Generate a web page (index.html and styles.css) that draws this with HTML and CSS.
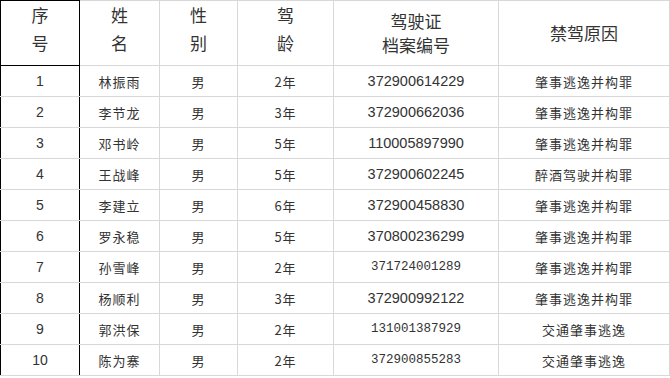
FILE: index.html
```html
<!DOCTYPE html>
<html lang="zh">
<head>
  <meta charset="UTF-8">
  <title>禁驾人员名单</title>
  <link rel="stylesheet" href="styles.css">
</head>
<body>
  <table class="list">
    <colgroup>
      <col class="c-no">
      <col class="c-name">
      <col class="c-sex">
      <col class="c-age">
      <col class="c-id">
      <col class="c-why">
    </colgroup>
    <tr class="head">
      <th class="no top">序<br>号</th>
      <th class="top">姓<br>名</th>
      <th class="top">性<br>别</th>
      <th class="top">驾<br>龄</th>
      <th class="mid">驾驶证<br>档案编号</th>
      <th class="mid">禁驾原因</th>
    </tr>
    <tr><td class="no">1</td><td class="cn">林振雨</td><td class="cn">男</td><td class="cn">2年</td><td class="num">372900614229</td><td class="cn">肇事逃逸并构罪</td></tr>
    <tr><td class="no">2</td><td class="cn">李节龙</td><td class="cn">男</td><td class="cn">3年</td><td class="num">372900662036</td><td class="cn">肇事逃逸并构罪</td></tr>
    <tr><td class="no">3</td><td class="cn">邓书岭</td><td class="cn">男</td><td class="cn">5年</td><td class="num">110005897990</td><td class="cn">肇事逃逸并构罪</td></tr>
    <tr><td class="no">4</td><td class="cn">王战峰</td><td class="cn">男</td><td class="cn">5年</td><td class="num">372900602245</td><td class="cn">醉酒驾驶并构罪</td></tr>
    <tr><td class="no">5</td><td class="cn">李建立</td><td class="cn">男</td><td class="cn">6年</td><td class="num">372900458830</td><td class="cn">肇事逃逸并构罪</td></tr>
    <tr><td class="no">6</td><td class="cn">罗永稳</td><td class="cn">男</td><td class="cn">5年</td><td class="num">370800236299</td><td class="cn">肇事逃逸并构罪</td></tr>
    <tr><td class="no">7</td><td class="cn">孙雪峰</td><td class="cn">男</td><td class="cn">2年</td><td class="mono">371724001289</td><td class="cn">肇事逃逸并构罪</td></tr>
    <tr><td class="no">8</td><td class="cn">杨顺利</td><td class="cn">男</td><td class="cn">3年</td><td class="num">372900992122</td><td class="cn">肇事逃逸并构罪</td></tr>
    <tr><td class="no">9</td><td class="cn">郭洪保</td><td class="cn">男</td><td class="cn">2年</td><td class="mono">131001387929</td><td class="cn">交通肇事逃逸</td></tr>
    <tr><td class="no">10</td><td class="cn">陈为寨</td><td class="cn">男</td><td class="cn">2年</td><td class="mono">372900855283</td><td class="cn">交通肇事逃逸</td></tr>
  </table>
</body>
</html>
```
FILE: styles.css
```css
body { margin: 0; background: #fff; color: #333; font-family: "Liberation Sans", "Noto Sans CJK SC", sans-serif; }

.list {
  border-collapse: collapse;
  table-layout: fixed;
  width: 669px;
}
.c-no { width: 79px; }
.c-name { width: 80px; }
.c-sex { width: 78px; }
.c-age { width: 96px; }
.c-id { width: 165px; }
.c-why { width: 171px; }

.list th, .list td {
  border: 1px solid #d8d8d8;
  text-align: center;
  padding: 0;
}

/* header */
.head th {
  height: 64px;
  font-family: "Noto Sans CJK SC", sans-serif;
  font-weight: normal;
  font-size: 17px;
  color: #333;
}
.head th.top {
  vertical-align: top;
  line-height: 28px;
  padding-top: 0;
}
.head th.mid {
  vertical-align: middle;
  line-height: 24px;
}
.head th.no { border: 1px solid #000; }

/* rows */
.list td { height: 30px; font-size: 14px; }
.list td.no {
  border-left: 1px solid #000;
  border-right: 1px solid #000;
  font-size: 14px;
}
.list td.cn {
  font-family: "Noto Sans CJK SC", sans-serif;
  font-size: 13px;
  letter-spacing: 1px;
  color: #333;
}
.list td.num { font-size: 14.5px; }
.list td.mono {
  font-family: "Liberation Mono", monospace;
  font-size: 12.5px;
}
```
